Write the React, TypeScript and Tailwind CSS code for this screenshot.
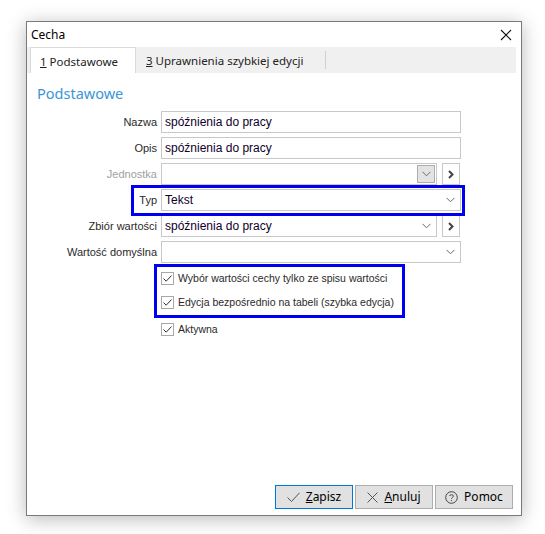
import React from "react";

const SEG = { fontFamily: '"Noto Sans", "Open Sans", sans-serif' };
const SANS = { fontFamily: '"Liberation Sans", Arial, sans-serif' };

function ChevronDown() {
  return (
    <svg width="9" height="6" viewBox="0 0 9 6">
      <path d="M0.5 0.8 L4.5 4.8 L8.5 0.8" fill="none" stroke="#6a6a6a" strokeWidth="1" />
    </svg>
  );
}

function ArrowBtn() {
  return (
    <div className="w-[18px] h-[22px] border border-[#c8c8c8] bg-white flex items-center justify-center">
      <svg width="6" height="9" viewBox="0 0 6 9">
        <path d="M1 1 L4.5 4.5 L1 8" fill="none" stroke="#444" strokeWidth="2" />
      </svg>
    </div>
  );
}

function Check() {
  return (
    <div className="w-[13px] h-[13px] border border-[#a8a8a8] bg-white flex items-center justify-center shrink-0">
      <svg width="11" height="11" viewBox="0 0 11 11">
        <path d="M1.5 5.5 L4.2 8.2 L9.5 2.5" fill="none" stroke="#333" strokeWidth="1" />
      </svg>
    </div>
  );
}

function Row({ label, children, grey }: { label: string; children: React.ReactNode; grey?: boolean }) {
  return (
    <div className="flex items-center h-[22px]">
      <div className={"w-[130px] text-right text-[11px] leading-none " + (grey ? "text-[#a0a0a0]" : "text-[#2a2a2a]")} style={SANS}>
        {label}
      </div>
      <div className="ml-[4px] flex items-center">{children}</div>
    </div>
  );
}

function Input({ w, text, chevron, grayChevron }: { w: string; text?: string; chevron?: boolean; grayChevron?: boolean }) {
  return (
    <div className={"h-[22px] border border-[#c8c8c8] bg-white flex items-center " + w} style={SANS}>
      <span className="pl-[3px] text-[12px] text-[#10002a] flex-1 leading-none">{text}</span>
      {chevron && !grayChevron && (
        <span className="pr-[5px] flex items-center">
          <ChevronDown />
        </span>
      )}
      {grayChevron && (
        <span className="mr-[1px] w-[18px] h-[18px] bg-[#e3e3e3] border border-[#adadad] flex items-center justify-center">
          <ChevronDown />
        </span>
      )}
    </div>
  );
}

export default function App() {
  return (
    <div className="w-[545px] h-[534px] bg-white overflow-hidden pt-[21px] pl-[26px]">
      <div className="w-[496px] h-[495px] border border-[#7a7a7a] bg-white flex flex-col shadow-[0_3px_18px_rgba(0,0,0,0.28)]">
        {/* title bar */}
        <div className="h-[25px] flex items-center justify-between pl-[4px] pr-[9px]" style={SEG}>
          <span className="text-[12px] text-black">Cecha</span>
          <svg width="12" height="12" viewBox="0 0 12 12">
            <path d="M1 1 L11 11 M11 1 L1 11" stroke="#111" strokeWidth="1.1" />
          </svg>
        </div>
        {/* tab strip */}
        <div className="h-[26px] mr-[5px] bg-[#f0f0f0] flex items-stretch" style={SEG}>
          <div className="ml-[3px] w-[106px] bg-white border-l border-r border-t border-[#dadada] pl-[9px] pt-[5px] text-[11.5px] text-[#222]">
            <span className="underline">1</span> Podstawowe
          </div>
          <div className="w-[190px] flex items-center">
            <div className="flex-1 pl-[10px] pt-[1px] text-[11.5px] text-[#222]">
              <span className="underline">3</span> Uprawnienia szybkiej edycji
            </div>
            <div className="w-px h-[18px] bg-[#cfcfcf]" />
          </div>
        </div>
        {/* content */}
        <div className="flex-1 flex flex-col">
          <div className="pl-[10px] pt-[10px] h-[30px] text-[14.5px] leading-[20px] text-[#3a95d9]" style={SEG}>
            Podstawowe
          </div>
          <div className="mt-[8px] flex flex-col gap-[4px]">
            <Row label="Nazwa">
              <Input w="w-[300px]" text="spóźnienia do pracy" />
            </Row>
            <Row label="Opis">
              <Input w="w-[300px]" text="spóźnienia do pracy" />
            </Row>
            <Row label="Jednostka" grey>
              <Input w="w-[276px]" grayChevron />
              <div className="ml-[5px]">
                <ArrowBtn />
              </div>
            </Row>
            <div className="relative">
              <div className="absolute left-[104px] top-[-4px] w-[334px] h-[31px] border-[3px] border-[#0000f0]" />
              <Row label="Typ">
                <Input w="w-[300px]" text="Tekst" chevron />
              </Row>
            </div>
            <Row label="Zbiór wartości">
              <Input w="w-[276px]" text="spóźnienia do pracy" chevron />
              <div className="ml-[5px]">
                <ArrowBtn />
              </div>
            </Row>
            <Row label="Wartość domyślna">
              <Input w="w-[300px]" chevron />
            </Row>
          </div>
          {/* checkboxes */}
          <div className="relative mt-[9px] pl-[134px]" style={SANS}>
            <div className="absolute left-[127px] top-[-8px] w-[251px] h-[54px] border-[3px] border-[#0000f0]" />
            <div className="flex items-center h-[13px] gap-[4px] text-[10.5px] text-[#2a2a2a]">
              <Check />
              <span>Wybór wartości cechy tylko ze spisu wartości</span>
            </div>
            <div className="mt-[11px] flex items-center h-[13px] gap-[4px] text-[10.5px] text-[#2a2a2a]">
              <Check />
              <span>Edycja bezpośrednio na tabeli (szybka edycja)</span>
            </div>
            <div className="mt-[14px] flex items-center h-[13px] gap-[4px] text-[10.5px] text-[#2a2a2a]">
              <Check />
              <span>Aktywna</span>
            </div>
          </div>
          <div className="flex-1" />
          {/* buttons */}
          <div className="flex justify-end gap-[2px] pr-[8px] pb-[6px]" style={SEG}>
            <button className="w-[78px] h-[24px] bg-[#e1e1e1] border border-[#0078d7] flex items-center justify-center gap-[6px] text-[12px] text-black">
              <svg width="13" height="11" viewBox="0 0 13 11">
                <path d="M0.5 5.5 L4.5 9.5 L12.5 0.8" fill="none" stroke="#555" strokeWidth="1" />
              </svg>
              <span>
                <span className="underline">Z</span>apisz
              </span>
            </button>
            <button className="w-[78px] h-[24px] bg-[#e1e1e1] border border-[#adadad] flex items-center justify-center gap-[6px] text-[12px] text-black">
              <svg width="11" height="11" viewBox="0 0 11 11">
                <path d="M0.5 0.5 L10.5 10.5 M10.5 0.5 L0.5 10.5" stroke="#555" strokeWidth="1" />
              </svg>
              <span>
                <span className="underline">A</span>nuluj
              </span>
            </button>
            <button className="w-[78px] h-[24px] bg-[#e1e1e1] border border-[#adadad] flex items-center justify-center gap-[6px] text-[12px] text-black">
              <svg width="13" height="13" viewBox="0 0 13 13">
                <circle cx="6.5" cy="6.5" r="5.8" fill="none" stroke="#444" strokeWidth="1" />
                <path d="M4.6 5.1 C4.6 3.2 8.4 3.2 8.4 5.1 C8.4 6.3 6.5 6.4 6.5 7.8" fill="none" stroke="#444" strokeWidth="1" />
                <circle cx="6.5" cy="9.6" r="0.7" fill="#444" />
              </svg>
              <span>Pomoc</span>
            </button>
          </div>
        </div>
      </div>
    </div>
  );
}
